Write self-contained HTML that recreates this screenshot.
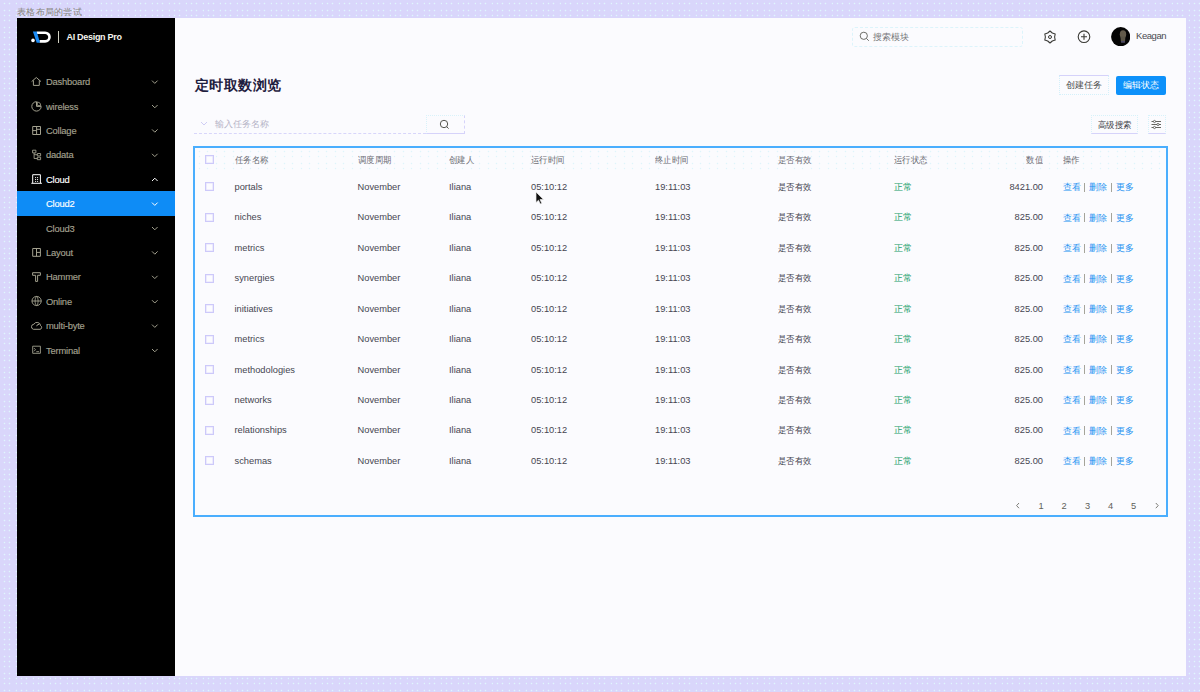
<!DOCTYPE html>
<html><head><meta charset="utf-8"><title>table</title>
<style>
*{margin:0;padding:0;box-sizing:border-box}
html,body{width:1200px;height:692px;overflow:hidden}
body{position:relative;font-family:"Liberation Sans",sans-serif;background-color:#d9d6fb;
background-image:radial-gradient(circle at 4.5px 3.5px,#dff7fd 0.6px,transparent 1.1px),radial-gradient(circle at 4.5px 10.5px,#dff7fd 0.6px,transparent 1.1px),radial-gradient(circle at 4.5px 15.5px,#dff7fd 0.6px,transparent 1.1px),radial-gradient(circle at 9.5px 3.5px,#dff7fd 0.6px,transparent 1.1px),radial-gradient(circle at 9.5px 10.5px,#dff7fd 0.6px,transparent 1.1px),radial-gradient(circle at 9.5px 15.5px,#dff7fd 0.6px,transparent 1.1px),radial-gradient(circle at 16.5px 3.5px,#dff7fd 0.6px,transparent 1.1px),radial-gradient(circle at 16.5px 10.5px,#dff7fd 0.6px,transparent 1.1px),radial-gradient(circle at 16.5px 15.5px,#dff7fd 0.6px,transparent 1.1px);background-size:17px 17px}
.a{position:absolute;white-space:nowrap}
#cap{left:17px;top:5.5px;font-size:9px;color:#86857a;line-height:12px;transform:scale(1.03);transform-origin:0 0}
#side{left:17px;top:18px;width:158px;height:658px;background:#000}
#main{left:175px;top:18px;width:1011px;height:658px;background:#fbfbfe}
.mi{position:absolute;left:0;width:158px;height:24px;font-size:10px;color:#a9a796;line-height:24px}
.mi .t{position:absolute;left:29px;top:0}
.mi svg{position:absolute}
.mi.on{background:#168fff;color:#fff}
.mi.w{color:#fff}
.th{font-size:9px;color:#6b6b73;line-height:12px;transform:scaleX(0.93);transform-origin:0 0}
.td{font-size:9.3px;color:#464651;line-height:12px}
.ok{color:#22a06a}
.lk{color:#2894f2}
.sep{color:#9a9a90}
.cb{position:absolute;width:9px;height:9px;border:1px solid #cdc9fa;background:#fcfcff;box-shadow:inset 0 0 0 0.6px #e3e0fc}
</style></head>
<body>
<div id="cap" class="a">表格布局的尝试</div>
<div id="side" class="a"></div>
<div id="main" class="a"></div>
<svg class="a" style="left:30px;top:30px" width="22" height="14" viewBox="0 0 22 14">
<path d="M6.7 2.7 H15.15 A4.35 4.35 0 0 1 15.15 11.4 H9.5" fill="none" stroke="#fff" stroke-width="2.6"/>
<polygon points="2.9,1.4 6.7,1.4 10,12.7 6.7,12.7" fill="#1b8bf5"/>
<circle cx="3" cy="10.4" r="1.8" fill="#fff"/>
</svg>
<div class="a" style="left:58.3px;top:31.4px;width:1px;height:11.3px;background:#d0d0c2"></div>
<div class="a" style="left:66.5px;top:30.5px;font-size:9px;font-weight:bold;color:#f4f4ee;line-height:12px;letter-spacing:-0.3px">AI Design Pro</div>
<div class="a" style="left:17px;top:191.2px;width:158px;height:24.6px;background:#0e8cf6"></div>
<svg class="a" style="left:0;top:0" width="180" height="380" viewBox="0 0 180 380"><path d="M31.6 81.6 L36.3 77.5 L41 81.6 M33.4 80.4 V85.4 H39.3 V80.4" fill="none" stroke="#a3a18f" stroke-width="1.0"/><path d="M41.2 106.4 A4.7 4.7 0 1 1 36.5 101.7" fill="none" stroke="#a3a18f" stroke-width="1.0"/><path d="M36.5 101.7 V106.4 H41.2" fill="none" stroke="#a3a18f" stroke-width="1.0"/><path d="M37.4 101.9 A3.9 3.9 0 0 1 40.9 105.5 H37.4 Z" fill="none" stroke="#a3a18f" stroke-width="0.8"/><path d="M32.7 126.5 H40.5 V134.5 H32.7 Z M36.6 126.5 V134.5 M32.7 130.6 H36.6 M36.6 129.3 H40.5" fill="none" stroke="#a3a18f" stroke-width="1.0"/><path d="M32.6 150.2 H35.9 V152.9 H32.6 Z M37.3 153.5 H40.6 V155.9 H37.3 Z M37.3 157.2 H40.6 V159.7 H37.3 Z M34.1 152.9 V158.5 H37.3 M34.1 154.7 H37.3" fill="none" stroke="#a3a18f" stroke-width="0.9"/><path d="M32.7 183.2 V174.7 H40.4 V183.2 M31.3 183.3 H41.9" fill="none" stroke="#ffffff" stroke-width="1.0"/><rect x="35.1" y="177.1" width="1" height="1" fill="#ffffff"/><rect x="35.1" y="179.0" width="1" height="1" fill="#ffffff"/><rect x="35.1" y="180.9" width="1" height="1" fill="#ffffff"/><rect x="37.1" y="177.1" width="1" height="1" fill="#ffffff"/><rect x="37.1" y="179.0" width="1" height="1" fill="#ffffff"/><rect x="37.1" y="180.9" width="1" height="1" fill="#ffffff"/><path d="M32.7 248.5 H40.4 V256.3 H32.7 Z M36.5 248.5 V256.3 M36.5 252.4 H40.4" fill="none" stroke="#a3a18f" stroke-width="1.0"/><path d="M32.6 272.7 H40.4 V275.3 H37.6 V281.4 H35.6 V275.3 H32.6 Z" fill="none" stroke="#a3a18f" stroke-width="1.0"/><path d="M36.6 296.4 A4.6 4.6 0 1 1 36.59 296.4 Z" fill="none" stroke="#a3a18f" stroke-width="1.0"/><path d="M36.6 296.4 C34.6 298 34.6 304 36.6 305.6 C38.6 304 38.6 298 36.6 296.4 M32 301 H41.2" fill="none" stroke="#a3a18f" stroke-width="0.9"/><path d="M33.4 329.3 H40 A1.9 1.9 0 0 0 40.6 325.7 A3.6 3.6 0 0 0 33.9 324.2 A2.6 2.6 0 0 0 33.4 329.3 Z M36.7 326.2 A2.2 2.2 0 0 1 39.2 324.4" fill="none" stroke="#a3a18f" stroke-width="1.0"/><path d="M32.7 346.2 H40.4 V353.3 H32.7 Z M34 348.1 L35.5 349.7 L34 351.3 M36.3 351.7 H39" fill="none" stroke="#a3a18f" stroke-width="0.9"/><path d="M152 80.6 L154.8 83.4 L157.6 80.6" fill="none" stroke="#a3a18f" stroke-width="1.0"/><path d="M152 105.0 L154.8 107.80000000000001 L157.6 105.0" fill="none" stroke="#a3a18f" stroke-width="1.0"/><path d="M152 129.4 L154.8 132.20000000000002 L157.6 129.4" fill="none" stroke="#a3a18f" stroke-width="1.0"/><path d="M152 153.79999999999998 L154.8 156.6 L157.6 153.79999999999998" fill="none" stroke="#a3a18f" stroke-width="1.0"/><path d="M152 181.0 L154.8 178.2 L157.6 181.0" fill="none" stroke="#ffffff" stroke-width="1.0"/><path d="M152 202.6 L154.8 205.4 L157.6 202.6" fill="none" stroke="#ffffff" stroke-width="1.0"/><path d="M152 226.99999999999997 L154.8 229.79999999999998 L157.6 226.99999999999997" fill="none" stroke="#a3a18f" stroke-width="1.0"/><path d="M152 251.39999999999998 L154.8 254.2 L157.6 251.39999999999998" fill="none" stroke="#a3a18f" stroke-width="1.0"/><path d="M152 275.8 L154.8 278.59999999999997 L157.6 275.8" fill="none" stroke="#a3a18f" stroke-width="1.0"/><path d="M152 300.20000000000005 L154.8 303.0 L157.6 300.20000000000005" fill="none" stroke="#a3a18f" stroke-width="1.0"/><path d="M152 324.6 L154.8 327.4 L157.6 324.6" fill="none" stroke="#a3a18f" stroke-width="1.0"/><path d="M152 349.0 L154.8 351.79999999999995 L157.6 349.0" fill="none" stroke="#a3a18f" stroke-width="1.0"/></svg>
<div class="a" style="left:46px;top:76.1px;font-size:9.4px;line-height:12px;letter-spacing:-0.2px;color:#a3a18f;-webkit-text-stroke:0.15px #a3a18f">Dashboard</div>
<div class="a" style="left:46px;top:100.5px;font-size:9.4px;line-height:12px;letter-spacing:-0.2px;color:#a3a18f;-webkit-text-stroke:0.15px #a3a18f">wireless</div>
<div class="a" style="left:46px;top:124.9px;font-size:9.4px;line-height:12px;letter-spacing:-0.2px;color:#a3a18f;-webkit-text-stroke:0.15px #a3a18f">Collage</div>
<div class="a" style="left:46px;top:149.3px;font-size:9.4px;line-height:12px;letter-spacing:-0.2px;color:#a3a18f;-webkit-text-stroke:0.15px #a3a18f">dadata</div>
<div class="a" style="left:46px;top:173.7px;font-size:9.4px;line-height:12px;letter-spacing:-0.2px;color:#fff;-webkit-text-stroke:0.15px #fff">Cloud</div>
<div class="a" style="left:46px;top:198.1px;font-size:9.4px;line-height:12px;letter-spacing:-0.2px;color:#fff;-webkit-text-stroke:0.15px #fff">Cloud2</div>
<div class="a" style="left:46px;top:222.5px;font-size:9.4px;line-height:12px;letter-spacing:-0.2px;color:#a3a18f;-webkit-text-stroke:0.15px #a3a18f">Cloud3</div>
<div class="a" style="left:46px;top:246.9px;font-size:9.4px;line-height:12px;letter-spacing:-0.2px;color:#a3a18f;-webkit-text-stroke:0.15px #a3a18f">Layout</div>
<div class="a" style="left:46px;top:271.3px;font-size:9.4px;line-height:12px;letter-spacing:-0.2px;color:#a3a18f;-webkit-text-stroke:0.15px #a3a18f">Hammer</div>
<div class="a" style="left:46px;top:295.7px;font-size:9.4px;line-height:12px;letter-spacing:-0.2px;color:#a3a18f;-webkit-text-stroke:0.15px #a3a18f">Online</div>
<div class="a" style="left:46px;top:320.1px;font-size:9.4px;line-height:12px;letter-spacing:-0.2px;color:#a3a18f;-webkit-text-stroke:0.15px #a3a18f">multi-byte</div>
<div class="a" style="left:46px;top:344.5px;font-size:9.4px;line-height:12px;letter-spacing:-0.2px;color:#a3a18f;-webkit-text-stroke:0.15px #a3a18f">Terminal</div>
<div class="a" style="left:852px;top:27px;width:171px;height:20px;border:1px dashed #dcf4fb;border-radius:3px"></div>
<svg class="a" style="left:859px;top:31px" width="11" height="11" viewBox="0 0 11 11"><circle cx="4.8" cy="4.8" r="3.6" fill="none" stroke="#6d6d68" stroke-width="1"/><path d="M7.4 7.4 L9.8 9.8" stroke="#6d6d68" stroke-width="1"/></svg>
<div class="a" style="left:873px;top:31px;font-size:9px;color:#77777a;line-height:12px">搜索模块</div>
<svg class="a" style="left:1043px;top:29.5px" width="14" height="14" viewBox="0 0 14 14"><path d="M7.00 1.00 L9.30 3.02 L12.20 4.00 L11.60 7.00 L12.20 10.00 L9.30 10.98 L7.00 13.00 L4.70 10.98 L1.80 10.00 L2.40 7.00 L1.80 4.00 L4.70 3.02 Z" fill="none" stroke="#3a3a36" stroke-width="1.1" stroke-linejoin="round"/><circle cx="7" cy="7" r="1.5" fill="none" stroke="#3a3a36" stroke-width="1"/></svg>
<svg class="a" style="left:1077px;top:30px" width="14" height="14" viewBox="0 0 14 14"><circle cx="7" cy="6.7" r="5.8" fill="none" stroke="#3a3a36" stroke-width="1.1"/><path d="M7 3.7 V9.7 M4 6.7 H10" stroke="#3a3a36" stroke-width="1.1"/></svg>
<svg class="a" style="left:1110.8px;top:26.7px" width="19.4" height="19.4" viewBox="0 0 19.4 19.4"><circle cx="9.7" cy="9.7" r="9.6" fill="#040404"/><ellipse cx="12" cy="7.2" rx="3.2" ry="3.9" fill="#625a4a"/><path d="M9.4 9.5 H14.4 L14 15.5 H10 Z" fill="#5a5446"/><path d="M10.2 14 H13.8 V15.6 H10.2 Z" fill="#4a4566"/></svg>
<div class="a" style="left:1136px;top:30.4px;font-size:9.5px;color:#4a4a50;line-height:12px;letter-spacing:-0.45px">Keagan</div>
<div class="a" style="left:194.5px;top:75.5px;font-size:14px;transform:scale(1.03);transform-origin:0 0;font-weight:bold;color:#1f2040;line-height:18px">定时取数浏览</div>
<div class="a" style="left:1059px;top:75px;width:50px;height:20px;border:1px dotted #d3f0fa;border-top:1px solid #d5d2fa;font-size:9px;color:#4a4a4a;line-height:19.5px;text-align:center">创建任务</div>
<div class="a" style="left:1116px;top:75.5px;width:50px;height:19.5px;background:#0d91fa;border-radius:2px;font-size:9px;color:#fff;line-height:19.5px;text-align:center">编辑状态</div>
<svg class="a" style="left:200px;top:121px" width="8" height="5" viewBox="0 0 8 5"><path d="M1 1 L4 4 L7 1" fill="none" stroke="#cfcdf5" stroke-width="1"/></svg>
<div class="a" style="left:214.5px;top:118px;font-size:9px;color:#b5b3c6;line-height:12px">输入任务名称</div>
<div class="a" style="left:194px;top:133px;width:232px;height:0;border-top:1px dashed #d8d6fa"></div>
<div class="a" style="left:426px;top:115px;width:39px;height:19px;border:1px dotted #d9f2fa;border-bottom:1px solid #d6d3fa;border-right:1px dashed #d6d3fa"></div>
<svg class="a" style="left:438.5px;top:118.5px" width="11" height="11" viewBox="0 0 11 11"><circle cx="5" cy="5" r="3.7" fill="none" stroke="#55554f" stroke-width="1"/><path d="M7.6 7.6 L9.6 9.6" stroke="#55554f" stroke-width="1"/></svg>
<div class="a" style="left:1091px;top:115px;width:47px;height:18.5px;border:1px dotted #d6f2fa;border-bottom:1px solid #d6d3fa"></div>
<div class="a" style="left:1097.8px;top:118.5px;font-size:9px;color:#3d3d45;line-height:12px;transform:scaleX(0.93);transform-origin:0 0">高级搜索</div>
<div class="a" style="left:1147.5px;top:115px;width:18px;height:18.5px;border:1px dotted #d6f2fa;border-bottom:1px solid #d6d3fa"></div>
<svg class="a" style="left:1151px;top:118.5px" width="11" height="11" viewBox="0 0 11 11"><path d="M0.5 2.5 H10 M0.5 5.5 H10 M0.5 8.5 H10" stroke="#55554f" stroke-width="0.9"/><circle cx="3.5" cy="2.5" r="1.1" fill="#fbfbfe" stroke="#55554f" stroke-width="0.8"/><circle cx="7" cy="5.5" r="1.1" fill="#fbfbfe" stroke="#55554f" stroke-width="0.8"/><circle cx="3.5" cy="8.5" r="1.1" fill="#fbfbfe" stroke="#55554f" stroke-width="0.8"/></svg>
<div class="a" style="left:193px;top:146px;width:975px;height:371px;border:2px solid #4aaefe"></div>
<div class="a" style="left:195px;top:148px;width:971px;height:23px;background-image:radial-gradient(circle at 4.5px 3.5px,#dff4fb 0.55px,transparent 1.1px),radial-gradient(circle at 4.5px 8.5px,#dff4fb 0.55px,transparent 1.1px),radial-gradient(circle at 4.5px 15.5px,#dff4fb 0.55px,transparent 1.1px),radial-gradient(circle at 4.5px 20.5px,#dff4fb 0.55px,transparent 1.1px),radial-gradient(circle at 12.5px 3.5px,#dff4fb 0.55px,transparent 1.1px),radial-gradient(circle at 12.5px 8.5px,#dff4fb 0.55px,transparent 1.1px),radial-gradient(circle at 12.5px 15.5px,#dff4fb 0.55px,transparent 1.1px),radial-gradient(circle at 12.5px 20.5px,#dff4fb 0.55px,transparent 1.1px);background-size:17px 23px"></div>
<div class="cb" style="left:205px;top:155px"></div>
<div class="a th" style="left:234.5px;top:153.5px">任务名称</div>
<div class="a th" style="left:357.5px;top:153.5px">调度周期</div>
<div class="a th" style="left:449px;top:153.5px">创建人</div>
<div class="a th" style="left:531px;top:153.5px">运行时间</div>
<div class="a th" style="left:655px;top:153.5px">终止时间</div>
<div class="a th" style="left:778px;top:153.5px">是否有效</div>
<div class="a th" style="left:894px;top:153.5px">运行状态</div>
<div class="a th" style="left:1003px;top:153.5px;width:40px;text-align:right;transform-origin:100% 0">数值</div>
<div class="a th" style="left:1063px;top:153.5px">操作</div>
<div class="cb" style="left:205px;top:182.4px"></div>
<div class="a td" style="left:234.5px;top:180.9px">portals</div>
<div class="a td" style="left:357.5px;top:180.9px">November</div>
<div class="a td" style="left:449px;top:180.9px">Iliana</div>
<div class="a td" style="left:531px;top:180.9px">05:10:12</div>
<div class="a td" style="left:655px;top:180.9px">19:11:03</div>
<div class="a td" style="left:778px;top:180.9px;transform:scaleX(0.93);transform-origin:0 0">是否有效</div>
<div class="a td ok" style="left:894px;top:180.9px">正常</div>
<div class="a td" style="left:993px;top:180.9px;width:50px;text-align:right">8421.00</div>
<div class="a td lk" style="left:1062.5px;top:181.2px;font-size:9px">查看</div>
<div class="a td lk" style="left:1089px;top:181.2px;font-size:9px">删除</div>
<div class="a td lk" style="left:1116px;top:181.2px;font-size:9px">更多</div>
<div class="a" style="left:1084px;top:182.7px;width:0.9px;height:9px;background:#a5a49a"></div>
<div class="a" style="left:1111px;top:182.7px;width:0.9px;height:9px;background:#a5a49a"></div>
<div class="cb" style="left:205px;top:212.8px"></div>
<div class="a td" style="left:234.5px;top:211.3px">niches</div>
<div class="a td" style="left:357.5px;top:211.3px">November</div>
<div class="a td" style="left:449px;top:211.3px">Iliana</div>
<div class="a td" style="left:531px;top:211.3px">05:10:12</div>
<div class="a td" style="left:655px;top:211.3px">19:11:03</div>
<div class="a td" style="left:778px;top:211.3px;transform:scaleX(0.93);transform-origin:0 0">是否有效</div>
<div class="a td ok" style="left:894px;top:211.3px">正常</div>
<div class="a td" style="left:993px;top:211.3px;width:50px;text-align:right">825.00</div>
<div class="a td lk" style="left:1062.5px;top:211.6px;font-size:9px">查看</div>
<div class="a td lk" style="left:1089px;top:211.6px;font-size:9px">删除</div>
<div class="a td lk" style="left:1116px;top:211.6px;font-size:9px">更多</div>
<div class="a" style="left:1084px;top:213.1px;width:0.9px;height:9px;background:#a5a49a"></div>
<div class="a" style="left:1111px;top:213.1px;width:0.9px;height:9px;background:#a5a49a"></div>
<div class="cb" style="left:205px;top:243.3px"></div>
<div class="a td" style="left:234.5px;top:241.8px">metrics</div>
<div class="a td" style="left:357.5px;top:241.8px">November</div>
<div class="a td" style="left:449px;top:241.8px">Iliana</div>
<div class="a td" style="left:531px;top:241.8px">05:10:12</div>
<div class="a td" style="left:655px;top:241.8px">19:11:03</div>
<div class="a td" style="left:778px;top:241.8px;transform:scaleX(0.93);transform-origin:0 0">是否有效</div>
<div class="a td ok" style="left:894px;top:241.8px">正常</div>
<div class="a td" style="left:993px;top:241.8px;width:50px;text-align:right">825.00</div>
<div class="a td lk" style="left:1062.5px;top:242.1px;font-size:9px">查看</div>
<div class="a td lk" style="left:1089px;top:242.1px;font-size:9px">删除</div>
<div class="a td lk" style="left:1116px;top:242.1px;font-size:9px">更多</div>
<div class="a" style="left:1084px;top:243.6px;width:0.9px;height:9px;background:#a5a49a"></div>
<div class="a" style="left:1111px;top:243.6px;width:0.9px;height:9px;background:#a5a49a"></div>
<div class="cb" style="left:205px;top:273.7px"></div>
<div class="a td" style="left:234.5px;top:272.2px">synergies</div>
<div class="a td" style="left:357.5px;top:272.2px">November</div>
<div class="a td" style="left:449px;top:272.2px">Iliana</div>
<div class="a td" style="left:531px;top:272.2px">05:10:12</div>
<div class="a td" style="left:655px;top:272.2px">19:11:03</div>
<div class="a td" style="left:778px;top:272.2px;transform:scaleX(0.93);transform-origin:0 0">是否有效</div>
<div class="a td ok" style="left:894px;top:272.2px">正常</div>
<div class="a td" style="left:993px;top:272.2px;width:50px;text-align:right">825.00</div>
<div class="a td lk" style="left:1062.5px;top:272.5px;font-size:9px">查看</div>
<div class="a td lk" style="left:1089px;top:272.5px;font-size:9px">删除</div>
<div class="a td lk" style="left:1116px;top:272.5px;font-size:9px">更多</div>
<div class="a" style="left:1084px;top:274.0px;width:0.9px;height:9px;background:#a5a49a"></div>
<div class="a" style="left:1111px;top:274.0px;width:0.9px;height:9px;background:#a5a49a"></div>
<div class="cb" style="left:205px;top:304.2px"></div>
<div class="a td" style="left:234.5px;top:302.7px">initiatives</div>
<div class="a td" style="left:357.5px;top:302.7px">November</div>
<div class="a td" style="left:449px;top:302.7px">Iliana</div>
<div class="a td" style="left:531px;top:302.7px">05:10:12</div>
<div class="a td" style="left:655px;top:302.7px">19:11:03</div>
<div class="a td" style="left:778px;top:302.7px;transform:scaleX(0.93);transform-origin:0 0">是否有效</div>
<div class="a td ok" style="left:894px;top:302.7px">正常</div>
<div class="a td" style="left:993px;top:302.7px;width:50px;text-align:right">825.00</div>
<div class="a td lk" style="left:1062.5px;top:303.0px;font-size:9px">查看</div>
<div class="a td lk" style="left:1089px;top:303.0px;font-size:9px">删除</div>
<div class="a td lk" style="left:1116px;top:303.0px;font-size:9px">更多</div>
<div class="a" style="left:1084px;top:304.5px;width:0.9px;height:9px;background:#a5a49a"></div>
<div class="a" style="left:1111px;top:304.5px;width:0.9px;height:9px;background:#a5a49a"></div>
<div class="cb" style="left:205px;top:334.6px"></div>
<div class="a td" style="left:234.5px;top:333.1px">metrics</div>
<div class="a td" style="left:357.5px;top:333.1px">November</div>
<div class="a td" style="left:449px;top:333.1px">Iliana</div>
<div class="a td" style="left:531px;top:333.1px">05:10:12</div>
<div class="a td" style="left:655px;top:333.1px">19:11:03</div>
<div class="a td" style="left:778px;top:333.1px;transform:scaleX(0.93);transform-origin:0 0">是否有效</div>
<div class="a td ok" style="left:894px;top:333.1px">正常</div>
<div class="a td" style="left:993px;top:333.1px;width:50px;text-align:right">825.00</div>
<div class="a td lk" style="left:1062.5px;top:333.4px;font-size:9px">查看</div>
<div class="a td lk" style="left:1089px;top:333.4px;font-size:9px">删除</div>
<div class="a td lk" style="left:1116px;top:333.4px;font-size:9px">更多</div>
<div class="a" style="left:1084px;top:334.9px;width:0.9px;height:9px;background:#a5a49a"></div>
<div class="a" style="left:1111px;top:334.9px;width:0.9px;height:9px;background:#a5a49a"></div>
<div class="cb" style="left:205px;top:365.0px"></div>
<div class="a td" style="left:234.5px;top:363.5px">methodologies</div>
<div class="a td" style="left:357.5px;top:363.5px">November</div>
<div class="a td" style="left:449px;top:363.5px">Iliana</div>
<div class="a td" style="left:531px;top:363.5px">05:10:12</div>
<div class="a td" style="left:655px;top:363.5px">19:11:03</div>
<div class="a td" style="left:778px;top:363.5px;transform:scaleX(0.93);transform-origin:0 0">是否有效</div>
<div class="a td ok" style="left:894px;top:363.5px">正常</div>
<div class="a td" style="left:993px;top:363.5px;width:50px;text-align:right">825.00</div>
<div class="a td lk" style="left:1062.5px;top:363.8px;font-size:9px">查看</div>
<div class="a td lk" style="left:1089px;top:363.8px;font-size:9px">删除</div>
<div class="a td lk" style="left:1116px;top:363.8px;font-size:9px">更多</div>
<div class="a" style="left:1084px;top:365.3px;width:0.9px;height:9px;background:#a5a49a"></div>
<div class="a" style="left:1111px;top:365.3px;width:0.9px;height:9px;background:#a5a49a"></div>
<div class="cb" style="left:205px;top:395.5px"></div>
<div class="a td" style="left:234.5px;top:394.0px">networks</div>
<div class="a td" style="left:357.5px;top:394.0px">November</div>
<div class="a td" style="left:449px;top:394.0px">Iliana</div>
<div class="a td" style="left:531px;top:394.0px">05:10:12</div>
<div class="a td" style="left:655px;top:394.0px">19:11:03</div>
<div class="a td" style="left:778px;top:394.0px;transform:scaleX(0.93);transform-origin:0 0">是否有效</div>
<div class="a td ok" style="left:894px;top:394.0px">正常</div>
<div class="a td" style="left:993px;top:394.0px;width:50px;text-align:right">825.00</div>
<div class="a td lk" style="left:1062.5px;top:394.3px;font-size:9px">查看</div>
<div class="a td lk" style="left:1089px;top:394.3px;font-size:9px">删除</div>
<div class="a td lk" style="left:1116px;top:394.3px;font-size:9px">更多</div>
<div class="a" style="left:1084px;top:395.8px;width:0.9px;height:9px;background:#a5a49a"></div>
<div class="a" style="left:1111px;top:395.8px;width:0.9px;height:9px;background:#a5a49a"></div>
<div class="cb" style="left:205px;top:425.9px"></div>
<div class="a td" style="left:234.5px;top:424.4px">relationships</div>
<div class="a td" style="left:357.5px;top:424.4px">November</div>
<div class="a td" style="left:449px;top:424.4px">Iliana</div>
<div class="a td" style="left:531px;top:424.4px">05:10:12</div>
<div class="a td" style="left:655px;top:424.4px">19:11:03</div>
<div class="a td" style="left:778px;top:424.4px;transform:scaleX(0.93);transform-origin:0 0">是否有效</div>
<div class="a td ok" style="left:894px;top:424.4px">正常</div>
<div class="a td" style="left:993px;top:424.4px;width:50px;text-align:right">825.00</div>
<div class="a td lk" style="left:1062.5px;top:424.7px;font-size:9px">查看</div>
<div class="a td lk" style="left:1089px;top:424.7px;font-size:9px">删除</div>
<div class="a td lk" style="left:1116px;top:424.7px;font-size:9px">更多</div>
<div class="a" style="left:1084px;top:426.2px;width:0.9px;height:9px;background:#a5a49a"></div>
<div class="a" style="left:1111px;top:426.2px;width:0.9px;height:9px;background:#a5a49a"></div>
<div class="cb" style="left:205px;top:456.4px"></div>
<div class="a td" style="left:234.5px;top:454.9px">schemas</div>
<div class="a td" style="left:357.5px;top:454.9px">November</div>
<div class="a td" style="left:449px;top:454.9px">Iliana</div>
<div class="a td" style="left:531px;top:454.9px">05:10:12</div>
<div class="a td" style="left:655px;top:454.9px">19:11:03</div>
<div class="a td" style="left:778px;top:454.9px;transform:scaleX(0.93);transform-origin:0 0">是否有效</div>
<div class="a td ok" style="left:894px;top:454.9px">正常</div>
<div class="a td" style="left:993px;top:454.9px;width:50px;text-align:right">825.00</div>
<div class="a td lk" style="left:1062.5px;top:455.2px;font-size:9px">查看</div>
<div class="a td lk" style="left:1089px;top:455.2px;font-size:9px">删除</div>
<div class="a td lk" style="left:1116px;top:455.2px;font-size:9px">更多</div>
<div class="a" style="left:1084px;top:456.7px;width:0.9px;height:9px;background:#a5a49a"></div>
<div class="a" style="left:1111px;top:456.7px;width:0.9px;height:9px;background:#a5a49a"></div>
<div class="a td" style="left:1031px;top:499.7px;width:20px;text-align:center;color:#5f5f5a">1</div>
<div class="a td" style="left:1054px;top:499.7px;width:20px;text-align:center;color:#5f5f5a">2</div>
<div class="a td" style="left:1077.5px;top:499.7px;width:20px;text-align:center;color:#5f5f5a">3</div>
<div class="a td" style="left:1100.6px;top:499.7px;width:20px;text-align:center;color:#5f5f5a">4</div>
<div class="a td" style="left:1123.6px;top:499.7px;width:20px;text-align:center;color:#5f5f5a">5</div>
<svg class="a" style="left:1014px;top:501px" width="8" height="9" viewBox="0 0 8 9"><path d="M5.0 2.0 L2.6 4.6 L5.0 7.2" fill="none" stroke="#6d6d66" stroke-width="0.9"/></svg>
<svg class="a" style="left:1153px;top:501px" width="8" height="9" viewBox="0 0 8 9"><path d="M2.8 2.0 L5.2 4.6 L2.8 7.2" fill="none" stroke="#6d6d66" stroke-width="0.9"/></svg>
<svg class="a" style="left:535.3px;top:191.3px" width="10" height="14" viewBox="0 0 10 14"><path d="M1 1 V11.5 L3.5 9.2 L5.3 13 L6.8 12.3 L5 8.6 H8.5 Z" fill="#111" stroke="#eee" stroke-width="0.7"/></svg>
</body></html>
